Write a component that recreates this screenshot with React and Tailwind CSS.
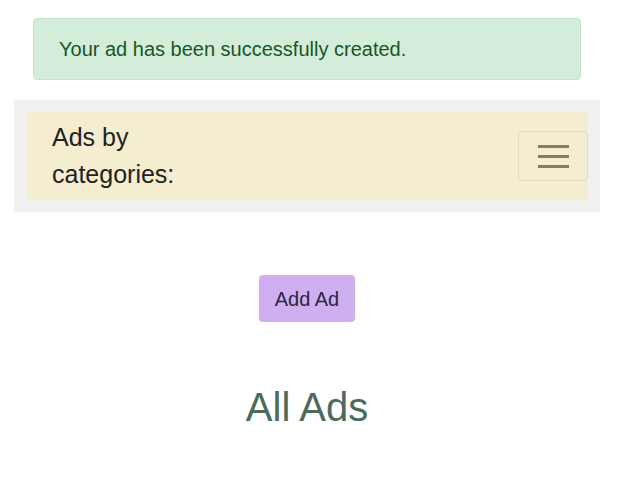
import React from 'react';

export default function App() {
    return (
        <div className="w-[623px] h-[482px] bg-white overflow-hidden" style={{ fontFamily: '"Liberation Sans", Arial, sans-serif' }}>
            <div className="pt-[18px] px-[33px] pr-[42px]">
                <div className="h-[62px] flex items-center pl-[25px] bg-[#d4edda] border border-[#c3e6cb] rounded-[4px] text-[#155724] text-[20px]">
                    Your ad has been successfully created.
                </div>
            </div>
            <div className="mt-[20px] ml-[14px] w-[586px] bg-[#f1f1f1] py-[12px] pl-[13px] pr-[12px]">
                <div className="h-[88px] bg-[#f5edd0] flex items-center justify-between pl-[25px]">
                    <div className="text-[25px] leading-[37px] text-[#222]">
                        Ads by<br />categories:
                    </div>
                    <button className="w-[70px] h-[50px] border border-[#e2dbc0] rounded-[5px] flex flex-col items-center justify-center gap-[7px]">
                        <span className="block w-[31px] h-[3px] bg-[#847c68]" />
                        <span className="block w-[31px] h-[3px] bg-[#847c68]" />
                        <span className="block w-[31px] h-[3px] bg-[#847c68]" />
                    </button>
                </div>
            </div>
            <div className="w-[614px]">
                <div className="flex justify-center mt-[63px]">
                    <button className="w-[96px] h-[47px] bg-[#cfaff0] rounded-[4px] text-[20px] text-[#2b2740]">
                        Add Ad
                    </button>
                </div>
                <h1 className="text-center mt-[61px] text-[40px] leading-[48px] text-[#4b6b5b]">All Ads</h1>
            </div>
        </div>
    );
}
